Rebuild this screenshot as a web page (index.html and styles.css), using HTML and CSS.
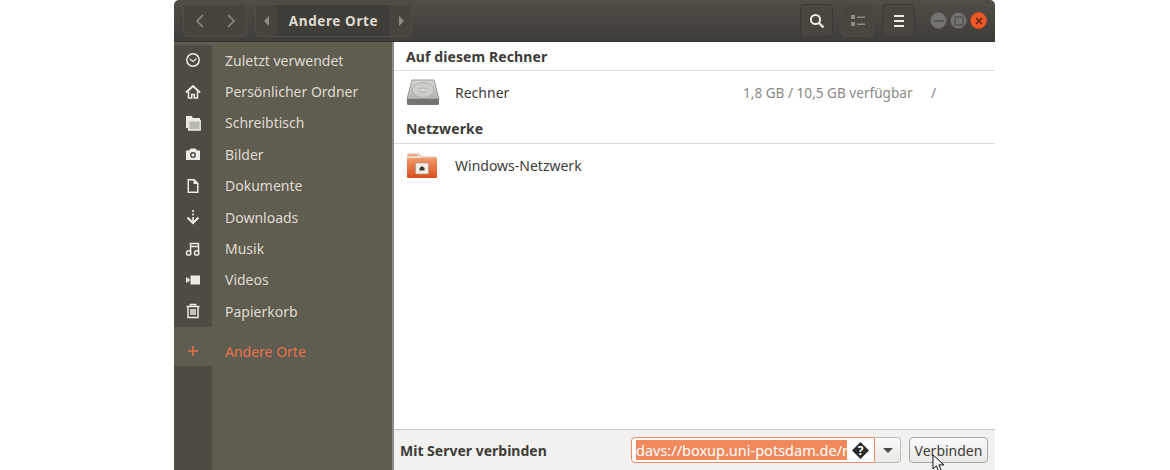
FILE: index.html
```html
<!DOCTYPE html>
<html lang="de">
<head>
<meta charset="utf-8">
<title>Andere Orte</title>
<link rel="stylesheet" href="styles.css">
</head>
<body>
<div class="window">
  <header class="titlebar">
    <div class="btn-group nav">
      <div class="nav-btn"><svg width="12" height="16" viewBox="0 0 12 16"><path d="M9 2 3 8l6 6" class="chev"/></svg></div>
      <div class="nav-btn"><svg width="12" height="16" viewBox="0 0 12 16"><path d="m3 2 6 6-6 6" class="chev"/></svg></div>
    </div>
    <div class="btn-group path">
      <div class="path-arrow"><svg width="6" height="10" viewBox="0 0 6 10"><path d="M5 0v10L0 5z" class="tri"/></svg></div>
      <div class="path-current">Andere Orte</div>
      <div class="path-arrow"><svg width="6" height="10" viewBox="0 0 6 10"><path d="M1 0v10l5-5z" class="tri"/></svg></div>
    </div>
    <div class="spacer"></div>
    <div class="tool-btn"><svg width="16" height="16" viewBox="0 0 16 16"><circle cx="6.500" cy="6.500" r="4.600" class="lens"/><path d="m10 10 4.500 4.500" class="lens-handle"/></svg></div>
    <div class="tool-btn dim"><svg width="14" height="12" viewBox="0 0 14 12"><path d="M0 0h4v4H0zM0 7h4v4H0z" class="list-a"/><path d="M6 1.500h8v1.500H6zM6 8.500h8V10H6z" class="list-a"/></svg></div>
    <div class="tool-btn"><svg width="12" height="12" viewBox="0 0 12 12"><path d="M1 0h10v2H1zM1 5h10v2H1zM1 10h10v2H1z" class="menu-i"/></svg></div>
    <div class="divider"></div>
    <div class="wm">
      <div class="wm-btn"><svg width="10" height="2" viewBox="0 0 10 2"><path d="M0 0h10v2H0z" class="wm-g"/></svg></div>
      <div class="wm-btn"><svg width="10" height="10" viewBox="0 0 10 10"><path d="M1 1h8v8H1z" class="wm-s"/></svg></div>
      <div class="wm-btn close"><svg width="8" height="8" viewBox="0 0 8 8"><path d="m1 1 6 6M7 1 1 7" class="wm-x"/></svg></div>
    </div>
  </header>
  <div class="main">
    <nav class="sidebar">
      <div class="places">
        <div class="place"><span class="ico"><svg width="16" height="16" viewBox="0 0 16 16"><circle cx="8" cy="8" r="6.200" class="ln"/><path d="M4.800 7 8 9.500l3.500-3" class="ln thin"/></svg></span><span class="lbl">Zuletzt verwendet</span></div>
        <div class="place"><span class="ico"><svg width="16" height="16" viewBox="0 0 16 16"><path d="M1 8.500 8 2l7 6.500" class="ln wide"/><path d="M3.500 7.500V14H6.700V10.500H9.300V14H12.500V7.500" class="ln"/></svg></span><span class="lbl">Persönlicher Ordner</span></div>
        <div class="place"><span class="ico"><svg width="16" height="16" viewBox="0 0 16 16"><path d="M1 1h5.500L8 3h7v2H3v8H1z" class="fl"/><path d="M3.800 5.800h11.400V15H3.800z" class="soft"/></svg></span><span class="lbl">Schreibtisch</span></div>
        <div class="place"><span class="ico"><svg width="16" height="16" viewBox="0 0 16 16"><path fill-rule="evenodd" d="M5.500 2.500h5L12 4.500h3v9.500H1V4.500h3zM8 6a3 3 0 1 0 0 6 3 3 0 0 0 0-6z" class="fl"/><circle cx="8" cy="9" r="1.600" class="fl"/></svg></span><span class="lbl">Bilder</span></div>
        <div class="place"><span class="ico"><svg width="16" height="16" viewBox="0 0 16 16"><path fill-rule="evenodd" d="M2.500 1H9.500L13.500 5V15H2.500zM4 2.500V13.500H12V6H8.500V2.500z" class="fl"/></svg></span><span class="lbl">Dokumente</span></div>
        <div class="place"><span class="ico"><svg width="16" height="16" viewBox="0 0 16 16"><path d="M7.200 1h1.600v2H7.200zM7.200 4.500h1.600v2H7.200zM7.200 8h1.600v4H7.200z" class="fl"/><path d="M2.500 8.500 8 14l5.500-5.500" class="ln wide"/></svg></span><span class="lbl">Downloads</span></div>
        <div class="place"><span class="ico"><svg width="16" height="16" viewBox="0 0 16 16"><path d="M5.500 11.500V2.500h8v9M5.500 5.500h8" class="ln"/><circle cx="3.700" cy="12" r="2.200" class="ln"/><circle cx="11.700" cy="12" r="2.200" class="ln"/></svg></span><span class="lbl">Musik</span></div>
        <div class="place"><span class="ico"><svg width="16" height="16" viewBox="0 0 16 16"><path d="M5.500 3.500H15v9H5.500zM1 5l3.500 2v2L1 11z" class="fl"/></svg></span><span class="lbl">Videos</span></div>
        <div class="place"><span class="ico"><svg width="16" height="16" viewBox="0 0 16 16"><path d="M1.500 3.500h13M3 3.500V14.500h10V3.500M5.500 3V1.500h5V3M6 6v6M8 6v6M10 6v6" class="ln"/></svg></span><span class="lbl">Papierkorb</span></div>
      </div>
      <div class="place current"><span class="ico"><svg width="12" height="12" viewBox="0 0 12 12"><path d="M5.200 1h1.600v4.200H11v1.600H6.800V11H5.200V6.800H1V5.200h4.200z" class="plus"/></svg></span><span class="lbl">Andere Orte</span></div>
      <div class="rail-fill"></div>
    </nav>
    <div class="sep"></div>
    <section class="content">
      <div class="list">
        <h2 class="section-title first">Auf diesem Rechner</h2>
        <div class="row">
          <svg class="row-icon" width="34" height="27" viewBox="0 0 34 27">
            <defs>
              <linearGradient id="hd" x1="0" y1="0" x2="0" y2="1"><stop offset="0" stop-color="#d8d8d4"/><stop offset="1" stop-color="#b2b2ae"/></linearGradient>
            </defs>
            <path d="M6 1h22l5 19H1z" fill="url(#hd)" stroke="#9a9a96"/>
            <path d="M1 20h32v4.500a1.500 1.500 0 0 1-1.500 1.500h-29A1.500 1.500 0 0 1 1 24.500z" fill="#74746f"/>
            <ellipse cx="17" cy="11" rx="11" ry="7.500" fill="#cdcdc9" stroke="#b0b0ac"/>
            <ellipse cx="17" cy="11" rx="3.500" ry="2" fill="#dcdcd8" stroke="#b0b0ac"/>
          </svg>
          <span class="row-name">Rechner</span>
          <span class="row-info">1,8 GB / 10,5 GB verfügbar</span>
          <span class="row-path">/</span>
        </div>
        <h2 class="section-title net-title">Netzwerke</h2>
        <div class="row net">
          <svg class="row-icon" width="30" height="25" viewBox="0 0 30 25">
            <defs>
              <linearGradient id="fo" x1="0" y1="0" x2="0" y2="1"><stop offset="0" stop-color="#f19a6c"/><stop offset="1" stop-color="#dc4f1c"/></linearGradient>
            </defs>
            <path d="M1 1h11l2 3h15v3H1z" fill="#f0e2d6" stroke="#d49a78" stroke-width=".8"/>
            <path d="M2 2.500h8" stroke="#ee8a5c" stroke-width="1.200"/>
            <path d="M0 5h30V24a1 1 0 0 1-1 1H1a1 1 0 0 1-1-1z" fill="url(#fo)"/>
            <rect x="8.500" y="10" width="13" height="11" rx="1" fill="#f2efe9" stroke="#a8907f" stroke-width=".6"/>
            <path d="M12.500 17.500V15l2.500-2 2.500 2v2.500z" fill="#3c3b37"/>
          </svg>
          <span class="row-name">Windows-Netzwerk</span>
        </div>
      </div>
      <footer class="connect">
        <span class="connect-label">Mit Server verbinden</span>
        <div class="combo">
          <div class="entry">
            <span class="entry-text"><span class="sel">davs://boxup.uni-potsdam.de/remote.php</span></span>
            <svg class="warn" width="17" height="17" viewBox="0 0 17 17"><path d="M8.500 0 17 8.500 8.500 17 0 8.500z" class="warn-bg"/><text x="8.500" y="12.800" text-anchor="middle" class="warn-q">?</text></svg>
          </div>
          <div class="combo-btn"><svg width="10" height="5" viewBox="0 0 10 5"><path d="M0 0h10L5 5z" class="combo-tri"/></svg></div>
        </div>
        <div class="connect-wrap">
          <div class="connect-btn">Verbinden</div>
          <svg class="cursor" width="15" height="19" viewBox="0 0 15 19"><path d="M1 1v14l3.400-3.200 2.400 6 2.600-1.100-2.500-5.800H12z" class="cur"/></svg>
        </div>
      </footer>
    </section>
  </div>
</div>
</body>
</html>
```
FILE: styles.css
```css
* { box-sizing: border-box; }
html, body { margin: 0; padding: 0; height: 100%; background: #fff; overflow: hidden; }
body { font-family: "Noto Sans", "Open Sans", sans-serif; font-size: 14px; }
.window { width: 821px; height: 470px; margin-left: 174px; display: flex; flex-direction: column; }
.titlebar { height: 42px; flex: none; display: flex; align-items: center; padding: 3px 8px 3px 9px; background: linear-gradient(#4f4d46, #3f3d37); border-radius: 5px 5px 0 0; border-bottom: 1px solid #34332e; }
.btn-group { height: 33px; display: flex; border: 1px solid #4f4d46; border-radius: 4px; background: #46443d; }
.nav { width: 64px; margin-right: 8px; }
.nav-btn { flex: 1; display: flex; align-items: center; justify-content: center; }
.chev { fill: none; stroke: #8d8b84; stroke-width: 1.600; }
.tri { fill: #8d8b84; }
.path { width: 157px; }
.path-arrow { width: 21px; display: flex; align-items: center; justify-content: center; }
.path-current { flex: 1; display: flex; align-items: center; justify-content: center; background: #3f3d37; color: #dfdbd2; font-weight: 700; font-size: 13.500px; letter-spacing: .6px; }
.spacer { flex: 1; }
.tool-btn { width: 33px; height: 33px; margin-left: 8px; display: flex; align-items: center; justify-content: center; background: #48463f; border: 1px solid #3a3933; border-radius: 4px; }
.dim { border-color: #4b4942; }
.lens { fill: none; stroke: #eeebe4; stroke-width: 2; }
.lens-handle { stroke: #eeebe4; stroke-width: 2.400; }
.list-a { fill: #8d8b84; }
.menu-i { fill: #eeebe4; }
.divider { width: 1px; height: 30px; background: #4a4841; margin: 0 7px; }
.wm { display: flex; gap: 3px; }
.wm-btn { width: 17px; height: 17px; border-radius: 50%; background: #74736d; display: flex; align-items: center; justify-content: center; border: 1px solid #5a5954; }
.wm-g { fill: #55544e; }
.wm-s { fill: none; stroke: #55544e; stroke-width: 1.500; }
.close { background: #ec5a2a; border-color: #c9481f; }
.wm-x { stroke: #5d2410; stroke-width: 1.500; }
.main { flex: 1; display: flex; min-height: 0; }
.sidebar { width: 218px; flex: none; display: flex; flex-direction: column; background: #5f5c50; padding-top: 2.500px; }
.places { display: flex; flex-direction: column; background: linear-gradient(90deg, #4e4c42 38px, #5f5c50 38px); }
.place { height: 31.400px; flex: none; display: flex; align-items: center; color: #dfdbd2; font-size: 14px; }
.ico { width: 38px; flex: none; display: flex; align-items: center; justify-content: center; }
.lbl { margin-left: 13px; }
.ln { fill: none; stroke: #ecebe5; stroke-width: 1.500; }
.thin { stroke-width: 1.200; }
.wide { stroke-width: 2; }
.fl { fill: #ecebe5; }
.soft { fill: #b9b8b1; stroke: #ecebe5; stroke-width: 1.400; }
.current { height: 30px; margin-top: 9px; color: #e8714a; }
.plus { fill: #e8714a; }
.rail-fill { flex: 1; width: 38px; background: #4e4c42; }
.sep { width: 2px; flex: none; background: #8c8b85; }
.content { flex: 1; min-width: 0; display: flex; flex-direction: column; background: #fff; }
.list { flex: 1; min-height: 0; }
.section-title { margin: 0; height: 29px; padding-left: 12px; display: flex; align-items: center; border-bottom: 1px solid #dcdbd8; font-size: 14px; font-weight: 700; color: #3d3c38; letter-spacing: .1px; }
.net-title { padding-bottom: 2px; }
.row { height: 44px; display: flex; align-items: center; padding: 0 0 1px 12px; color: #3d3c38; }
.net { height: 43px; padding-bottom: 1px; }
.row-icon { flex: none; }
.row-name { margin-left: 15px; font-size: 14px; width: 0; flex: none; white-space: nowrap; }
.row-info { margin-left: 288px; width: 188px; flex: none; color: #8a8986; font-size: 13.600px; white-space: nowrap; }
.row-path { color: #8a8986; }
.net .row-icon { margin-left: 1px; margin-right: 3px; }
.connect { height: 41px; flex: none; display: flex; align-items: center; padding: 0 8px 0 6px; background: #f2f1ef; border-top: 1px solid #c4c3bf; }
.connect-label { width: 231px; flex: none; font-weight: 700; font-size: 14px; color: #3d3c38; }
.combo { width: 270px; height: 26px; flex: none; display: flex; }
.entry { width: 244px; display: flex; align-items: center; padding: 0 3px 0 4px; background: #fff; border: 1px solid #ed8a64; border-radius: 4px 0 0 4px; }
.entry-text { width: 211px; flex: none; overflow: hidden; white-space: nowrap; font-size: 14.500px; line-height: 20px; }
.sel { background: #f08a5d; color: #fff; display: inline-block; }
.warn { margin-left: 5px; flex: none; }
.warn-bg { fill: #2b2a27; }
.warn-q { fill: #fff; font-size: 12px; font-weight: 700; font-family: "Noto Sans", sans-serif; }
.combo-btn { flex: 1; display: flex; align-items: center; justify-content: center; background: linear-gradient(#fbfaf9, #e9e8e5); border: 1px solid #bdbcb8; border-left: 0; border-radius: 0 4px 4px 0; }
.combo-tri { fill: #4a4945; }
.connect-wrap { position: relative; margin-left: 8px; }
.connect-btn { width: 79px; height: 26px; display: flex; align-items: center; justify-content: center; background: linear-gradient(#fbfaf9, #e9e8e5); border: 1px solid #a9a8a4; border-radius: 4px; font-size: 14px; color: #3d3c38; }
.cursor { position: absolute; left: 23px; top: 17px; }
.cur { fill: #f6f6f6; stroke: #111; stroke-width: 1; }
```
